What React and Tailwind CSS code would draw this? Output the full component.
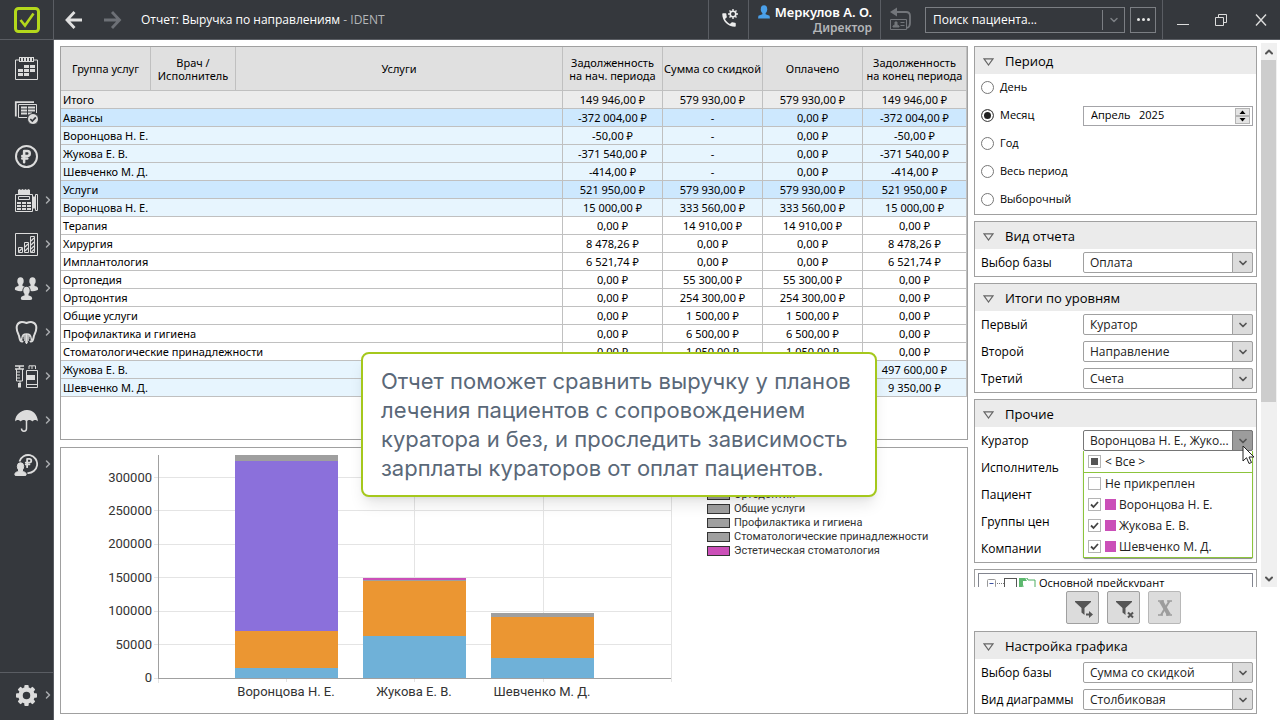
import { useState } from 'react';
import { ChevronDown, ChevronRight, ChevronUp, RussianRuble } from 'lucide-react';
import { MdPhone } from 'react-icons/md';

const rows = [
  { name: 'Итого', tone: 'total', v: ['149 946,00 ₽', '579 930,00 ₽', '579 930,00 ₽', '149 946,00 ₽'] },
  { name: 'Авансы', tone: 'group', v: ['-372 004,00 ₽', '-', '0,00 ₽', '-372 004,00 ₽'] },
  { name: 'Воронцова Н. Е.', tone: 'person', v: ['-50,00 ₽', '-', '0,00 ₽', '-50,00 ₽'] },
  { name: 'Жукова Е. В.', tone: 'person', v: ['-371 540,00 ₽', '-', '0,00 ₽', '-371 540,00 ₽'] },
  { name: 'Шевченко М. Д.', tone: 'person', v: ['-414,00 ₽', '-', '0,00 ₽', '-414,00 ₽'] },
  { name: 'Услуги', tone: 'group', v: ['521 950,00 ₽', '579 930,00 ₽', '579 930,00 ₽', '521 950,00 ₽'] },
  { name: 'Воронцова Н. Е.', tone: 'person', v: ['15 000,00 ₽', '333 560,00 ₽', '333 560,00 ₽', '15 000,00 ₽'] },
  { name: 'Терапия', tone: 'plain', v: ['0,00 ₽', '14 910,00 ₽', '14 910,00 ₽', '0,00 ₽'] },
  { name: 'Хирургия', tone: 'plain', v: ['8 478,26 ₽', '0,00 ₽', '0,00 ₽', '8 478,26 ₽'] },
  { name: 'Имплантология', tone: 'plain', v: ['6 521,74 ₽', '0,00 ₽', '0,00 ₽', '6 521,74 ₽'] },
  { name: 'Ортопедия', tone: 'plain', v: ['0,00 ₽', '55 300,00 ₽', '55 300,00 ₽', '0,00 ₽'] },
  { name: 'Ортодонтия', tone: 'plain', v: ['0,00 ₽', '254 300,00 ₽', '254 300,00 ₽', '0,00 ₽'] },
  { name: 'Общие услуги', tone: 'plain', v: ['0,00 ₽', '1 500,00 ₽', '1 500,00 ₽', '0,00 ₽'] },
  { name: 'Профилактика и гигиена', tone: 'plain', v: ['0,00 ₽', '6 500,00 ₽', '6 500,00 ₽', '0,00 ₽'] },
  { name: 'Стоматологические принадлежности', tone: 'plain', v: ['0,00 ₽', '1 050,00 ₽', '1 050,00 ₽', '0,00 ₽'] },
  { name: 'Жукова Е. В.', tone: 'person', v: ['', '', '', '497 600,00 ₽'] },
  { name: 'Шевченко М. Д.', tone: 'person', v: ['', '', '', '9 350,00 ₽'] },
];

const tones = {
  total: 'bg-[#ececec]',
  group: 'bg-[#cde8fe]',
  person: 'bg-[#e7f5fe]',
  plain: 'bg-white',
};

const bars = [
  { name: 'Воронцова Н. Е.', x: 175, parts: [[15000, '#6fb1d8'], [55300, '#eb9632'], [254300, '#8b70db'], [9000, '#9f9f9f']] },
  { name: 'Жукова Е. В.', x: 303, parts: [[63500, '#6fb1d8'], [81500, '#eb9632'], [1500, '#9f9f9f'], [3000, '#cb4fb8']] },
  { name: 'Шевченко М. Д.', x: 431, parts: [[30000, '#6fb1d8'], [61500, '#eb9632'], [5500, '#9f9f9f']] },
];

const legend = [
  ['Ортодонтия', 'bg-[#9f9f9f]'],
  ['Общие услуги', 'bg-[#9f9f9f]'],
  ['Профилактика и гигиена', 'bg-[#9f9f9f]'],
  ['Стоматологические принадлежности', 'bg-[#9f9f9f]'],
  ['Эстетическая стоматология', 'bg-[#cb4fb8]'],
];

function Bust({ x, y }) {
  return (
    <g transform={`translate(${x} ${y})`} fill="#dcdcdc">
      <ellipse cx="0" cy="0" rx="3.2" ry="3.8" />
      <path d="M-2 2.5V5c-1.500.4-3.200.6-3.600 2.400-.2 1 .2 1.600 1 1.900 3 1.300 6.200 1.300 9.200 0 .8-.3 1.200-.9 1-1.900C5.200 5.600 3.500 5.400 2 5V2.500z" />
    </g>
  );
}

const icons = {
  'Расписание': (
    <>
      <path d="M4 3H.5v19.500h22V3H19" />
      {[4, 7, 10, 13, 16].map(x => <rect key={x} x={x + 0.5} y="0.5" width="2" height="4" />)}
      <g fill="#dcdcdc" stroke="none">
        <path d="M9 8h5v3H9zM15 8h5v3h-5zM3 12h5v3H3zM9 12h5v3H9zM15 12h5v3h-5zM3 16h5v3H3zM9 16h5v3H9z" />
      </g>
    </>
  ),
  'Приемы': (
    <>
      <path d="M.8 15.500V1.200H19" strokeWidth="1.800" />
      <path d="M12 16.500H3.500v-13h18V12" />
      <path d="M6 6.500h6M13 6.500h7M6 9.500h6M13 9.500h7M6 12.500h6M13 12.500h4" strokeWidth="2" />
      <circle cx="18" cy="18" r="5.500" fill="#dcdcdc" stroke="#35383d" />
      <path d="M15.300 18l2 2 3.500-3.600" stroke="#35383d" strokeWidth="1.700" />
    </>
  ),
  'Касса': (
    <>
      <circle cx="11.500" cy="11.500" r="10.500" strokeWidth="2" />
      <RussianRuble x="3.500" y="4" size={15} strokeWidth={4} color="#dcdcdc" />
    </>
  ),
  'Отчеты кассы': (
    <>
      <path d="M3 5V1l1.500-1L6 1l1.500-1L9 1l1.500-1L12 1l1.500-1L15 1v4z" fill="#dcdcdc" stroke="none" />
      <path d="M.5 5.500h17v17H.5z" />
      <path d="M3.500 7.500h11v3h-11z" />
      <path d="M2 14h4M7 14h4M12 14h4M2 17h4M7 17h4M12 17h4M2 20h4M7 20h4M12 20h4" strokeWidth="2" />
      <path d="M18 7.500h2.500v12H18z" fill="#dcdcdc" stroke="none" />
      <path d="M20.500 21.500h2v-16h-2z" />
    </>
  ),
  'Отчеты': (
    <>
      <path d="M.5.5h22v22H.5z" />
      <path d="M3.500 14.500h4v5h-4zM9.500 9.500h4v10h-4zM15.500 3.500h4v16h-4z" />
      <path d="M4 18.500l3-3M10 14l3-3M10 18l3-3M16 8l3-3M16 12l3-3M16 16l3-3M16.500 19l2.500-2.500" strokeWidth="1.300" />
    </>
  ),
  'Персонал': (
    <g stroke="none">
      <Bust x={5.5} y={4} />
      <Bust x={17.5} y={4} />
      <ellipse cx="11.500" cy="14" rx="4.200" ry="4.800" fill="#35383d" />
      <Bust x={11.5} y={13.5} />
    </g>
  ),
  'Лечение': (
    <>
      <path d="M7.500 20.500C4 21 5 16 3.500 13.500 2 10.500 1 8 2 4.500 3.500.500 7.500.5 11.500 2c4-1.500 8-1.500 9.500 2.500 1 3.500 0 6-1.500 9-1.500 2.500-.5 7.500-4 7" strokeWidth="2" strokeLinecap="round" />
      <path d="M6.500 19c.5-6 2.500-6 5-6s4.500 0 5 6" strokeWidth="1.500" />
      <path d="M8 15h7M8.500 17h6M9 19h5M10 21h3M11.500 13v10" strokeWidth="1.300" />
    </>
  ),
  'Склад': (
    <>
      <path d="M0 1h9M4.500 1v3M0 4h9" strokeWidth="1.600" />
      <path d="M1.500 4v12h6V4M2 7h3M2 10h3M2 13h3M5 16v3" />
      <path d="M3 18h3v4.500H3z" fill="#dcdcdc" stroke="none" />
      <path d="M14 4V.8h6.500V4M17 1v3" />
      <path d="M11.500 5.500h11v17h-11zM11.500 19.500h11" />
      <path d="M12 10h8v5h-8z" fill="#dcdcdc" stroke="none" />
    </>
  ),
  'Страхование': (
    <>
      <path d="M0 12.500C.5 5 6 1.500 11.500 1S22.500 5 23 12.500c-1.500-2-4-2-5.700 0-1.500-2-4.300-2-5.800 0-1.500-2-4.300-2-5.800 0-1.700-2-4.200-2-5.700 0z" fill="#dcdcdc" stroke="none" />
      <path d="M11.500 11v8.500c0 3.500-5 3.500-5 0" strokeWidth="1.500" />
    </>
  ),
  'Зарплата': (
    <>
      <path d="M4.500 8.500a9 9 0 1 1 8 11.500" strokeWidth="1.800" />
      <RussianRuble x="8" y="4.500" size={11} strokeWidth={4} color="#dcdcdc" />
      <Bust x={5.5} y={13.5} />
    </>
  ),
};

function SideButton({ label, arrow, children }) {
  return (
    <button type="button" aria-label={label} className="flex h-11 w-full items-center pl-3.5">
      <svg viewBox="-1 -1 24 24" className="h-6 w-6 shrink-0" fill="none" stroke="#dcdcdc">{children}</svg>
      {arrow && <ChevronRight className="ml-1 h-3 w-3 shrink-0 text-[#a9abae]" strokeWidth={3} />}
    </button>
  );
}

function Sidebar() {
  return (
    <nav className="flex w-[54px] shrink-0 flex-col border-r border-[#5a5d63] bg-[#35383d] pt-1.5">
      {Object.entries(icons).map(([label, drawing], i) => (
        <SideButton key={label} label={label} arrow={i > 2}>{drawing}</SideButton>
      ))}
      <div className="mt-auto h-12 border-t border-[#5a5d63]">
        <SideButton label="Настройки" arrow>
          <circle cx="11.500" cy="11.500" r="6" strokeWidth="4.500" />
          {[0, 45, 90, 135, 180, 225, 270, 315].map(a => (
            <rect key={a} x="9.300" y="1" width="4.400" height="4" rx="1" fill="#dcdcdc" stroke="none" transform={`rotate(${a} 11.500 11.500)`} />
          ))}
        </SideButton>
      </div>
    </nav>
  );
}

function TitleBar() {
  return (
    <header className="flex h-10 shrink-0 items-stretch border-b border-[#5a5d63] bg-[#35383d] text-white">
      <div className="flex w-[54px] shrink-0 items-center justify-center border-r border-[#5a5d63]">
        <svg viewBox="0 0 26 26" className="h-[26px] w-[26px]" fill="none" stroke="#b4d81c">
          <rect x="1.500" y="1.500" width="23" height="23" rx="3" strokeWidth="3" />
          <path d="M6.500 13l4.500 5.500L19.500 6.500" strokeWidth="2.600" />
        </svg>
      </div>
      <button type="button" aria-label="Назад" className="ml-2.5 flex items-center">
        <svg viewBox="0 0 20 20" className="h-5 w-5" fill="none" stroke="#e0e0e0" strokeWidth="2.800">
          <path d="M10.500 2L3 10l7.500 8M3 10H18" />
        </svg>
      </button>
      <button type="button" aria-label="Вперед" className="ml-[18px] flex items-center">
        <svg viewBox="0 0 20 20" className="h-5 w-5" fill="none" stroke="#6d7076" strokeWidth="2.800">
          <path d="M10 2l7.500 8-7.500 8M17.500 10H2" />
        </svg>
      </button>
      <h1 className="ml-[19px] flex-1 self-center whitespace-nowrap font-['Open_Sans'] text-xs">
        Отчет: Выручка по направлениям <span className="text-[#b4b6b9]">- IDENT</span>
      </h1>
      <button type="button" aria-label="Телефония" className="flex w-[41px] items-center justify-center border-x border-[#5a5d63]">
        <span className="relative">
          <MdPhone className="h-[18px] w-[18px] text-[#ececec]" />
          <svg viewBox="0 0 10 10" className="absolute -top-0.5 right-0 h-2.5 w-2.5" fill="none" stroke="#ececec">
            <circle cx="5" cy="5" r="2.800" strokeWidth="1.600" />
            <path d="M5 0v2M5 8v2M0 5h2M8 5h2M1.500 1.500l1.200 1.200M7.300 7.300l1.200 1.200M8.500 1.500L7.300 2.700M2.700 7.300L1.500 8.500" strokeWidth="1.400" />
          </svg>
        </span>
      </button>
      <div className="flex w-[132px] flex-col items-end justify-center border-r border-[#5a5d63] pr-2 leading-4">
        <div className="flex items-center gap-1 text-[13px] font-semibold">
          <svg viewBox="0 0 12 13" className="h-3.5 w-3.5" fill="#4aa0ea">
            <ellipse cx="6" cy="4" rx="3" ry="3.700" />
            <path d="M4.500 6.500v2L.8 10 .5 12.500h11L11.200 10 7.500 8.500v-2z" />
          </svg>
          Меркулов А. О.
        </div>
        <div className="text-xs font-semibold text-[#b4b6b9]">Директор</div>
      </div>
      <button type="button" aria-label="Карточка" className="ml-2 flex w-6 items-center">
        <svg viewBox="0 0 24 26" className="h-[26px] w-6" fill="none" stroke="#73767b">
          <path d="M8 5h9q4 0 4 4v7q0 4-3 5" strokeWidth="1.800" />
          <path d="M1 5l7-4.500v9z" fill="#73767b" stroke="none" />
          <path d="M1.500 12.500h16v10h-16z" />
          <path d="M4 20v-1l2-1v-3h2v3l2 1v1zM11.500 15.500h4M11.500 18.500h4" fill="#73767b" />
        </svg>
      </button>
      <div className="ml-3 flex w-[200px] self-center border border-[#7b7e83]">
        <input type="text" aria-label="Поиск пациента" placeholder="Поиск пациента..." className="h-6 min-w-0 flex-1 px-[7px] font-['Open_Sans'] text-xs outline-none placeholder:text-white" />
        <button type="button" aria-label="История поиска" className="my-0.5 flex w-[22px] items-center justify-center border-l border-[#7b7e83]">
          <ChevronDown className="h-3 w-3 text-[#7b7e83]" strokeWidth={3} />
        </button>
      </div>
      <button type="button" aria-label="Еще" className="ml-[5px] flex h-[26px] w-[26px] items-center justify-center gap-0.5 self-center border border-[#7b7e83]">
        {[1, 2, 3].map(i => <span key={i} className="h-[3px] w-[3px] rounded-full bg-[#e6e6e6]" />)}
      </button>
      <div className="ml-1.5 flex w-[118px] items-center border-l border-[#5a5d63] pl-3.5">
        <button type="button" aria-label="Свернуть" className="mt-2.5 h-px w-3 bg-[#dcdcdc]" />
        <button type="button" aria-label="Восстановить" className="ml-[26px]">
          <svg viewBox="0 0 12 12" className="h-3 w-3" fill="none" stroke="#dcdcdc">
            <path d="M.5 3.500h8v8h-8zM3.500 3V.5h8v8H9" />
          </svg>
        </button>
        <button type="button" aria-label="Закрыть" className="ml-7">
          <svg viewBox="0 0 12 12" className="h-3 w-3" fill="none" stroke="#dcdcdc" strokeWidth="1.400">
            <path d="M1 .5l10 11M11 .5L1 11.500" />
          </svg>
        </button>
      </div>
    </header>
  );
}

function ReportTable() {
  const th = 'border-b border-r border-[#c0c0c0] p-0 font-normal leading-[13px]';
  return (
    <div className="min-h-0 flex-1 overflow-hidden border border-[#a0a0a0] bg-white">
      <table className="w-full table-fixed border-separate border-spacing-0 text-[11px]">
        <colgroup>
          <col className="w-[90px]" /><col className="w-[85px]" /><col />
          <col className="w-[100px]" /><col className="w-[100px]" /><col className="w-[100px]" /><col className="w-[104px]" />
        </colgroup>
        <thead>
          <tr className="h-11 bg-[#e0e0e0]">
            <th className={th}>Группа услуг</th>
            <th className={th}>Врач /<br />Исполнитель</th>
            <th className={th}>Услуги</th>
            <th className={th}>Задолженность<br />на нач. периода</th>
            <th className={`${th} whitespace-nowrap`}>Сумма со скидкой</th>
            <th className={th}>Оплачено</th>
            <th className={`${th} whitespace-nowrap`}>Задолженность<br />на конец периода</th>
          </tr>
        </thead>
        <tbody>
          {rows.map((r, i) => (
            <tr key={i} className={`h-[18px] ${tones[r.tone]}`}>
              <td colSpan={3} className="border-b border-r border-[#c0c0c0] p-0 pl-0.5 leading-[17px]">{r.name}</td>
              {r.v.map((v, j) => (
                <td key={j} className="border-b border-r border-[#c0c0c0] p-0 text-center leading-[17px]">{v}</td>
              ))}
            </tr>
          ))}
        </tbody>
      </table>
    </div>
  );
}

function Chart() {
  const y = v => 230 - (v * 200.5) / 300000;
  return (
    <div className="flex h-[267px] shrink-0 border border-[#a0a0a0] bg-white">
      <svg viewBox="0 0 640 265" className="h-[265px] w-[640px] shrink-0" shapeRendering="crispEdges">
        {[0, 50000, 100000, 150000, 200000, 250000, 300000].map(t => (
          <g key={t}>
            <line x1="93" x2="610" y1={y(t)} y2={y(t)} stroke="#e4e4e4" />
            <text x="91" y={Math.round(y(t)) + 4} textAnchor="end" className="fill-[#333] font-[Roboto] text-[13px]">{t}</text>
          </g>
        ))}
        {[225.5, 353.5, 482.5, 610.5].map(x => <line key={x} x1={x} x2={x} y1="7" y2="234" stroke="#e4e4e4" />)}
        {bars.map(b => {
          let sum = 0;
          return (
            <g key={b.name}>
              {b.parts.map(([v, color], i) => {
                const bottom = y(sum);
                sum += v;
                return <rect key={i} x={b.x - 1} y={y(sum)} width="103" height={bottom - y(sum)} fill={color} />;
              })}
              <text x={b.x + 50} y="248" textAnchor="middle" className="fill-[#333] font-[Roboto] text-[13px]">{b.name}</text>
            </g>
          );
        })}
        <path d="M97.500 7v223.500H610" fill="none" stroke="#a0a0a0" />
        <path d="M97.500 231v4" stroke="#e4e4e4" />
      </svg>
      <ul className="ml-1.5 mt-10 font-[Roboto] text-[11px] leading-[14px] text-[#333]">
        {legend.map(([name, color]) => (
          <li key={name} className="flex items-center gap-1 whitespace-nowrap">
            <span className={`h-2.5 w-[23px] border border-[#333] ${color}`} />
            {name}
          </li>
        ))}
      </ul>
    </div>
  );
}

function Panel({ title, children }) {
  return (
    <section className="shrink-0 border border-[#a0a0a0] bg-white">
      <h2 className="bg-[#ebebeb]">
        <button type="button" className="flex h-[27px] w-full items-center gap-[11px] pl-2 pt-0.5 text-[13px]">
          <svg viewBox="0 0 11 8" className="h-2 w-[11px]" fill="none" stroke="#666" strokeWidth="1.200">
            <path d="M1 .8h9L5.500 7z" />
          </svg>
          {title}
        </button>
      </h2>
      {children}
    </section>
  );
}

function SelectRow({ id, label, value, open }) {
  return (
    <div className="flex h-[27px] items-center pl-1.5 pr-[3px] text-xs">
      <label htmlFor={id} className="w-[102px] shrink-0 whitespace-nowrap">{label}</label>
      <div className="relative min-w-0 flex-1">
        <select id={id} className={`block h-[21px] w-full appearance-none rounded-xs border bg-white pl-1.5 leading-[19px] text-[#222] ${open ? 'border-[#777]' : 'border-[#a0a0a0]'}`}>
          <option>{value}</option>
        </select>
        <span className={`pointer-events-none absolute inset-y-0 right-0 flex w-[21px] items-center justify-center rounded-r-xs border ${open ? 'border-[#777] bg-[#9c9c9c]' : 'border-[#a0a0a0] bg-[#dcdcdc]'}`}>
          <ChevronDown className="h-3 w-3 text-[#555]" strokeWidth={3.5} />
        </span>
      </div>
    </div>
  );
}

function CheckItem({ label, checked, mixed, color, onChange }) {
  return (
    <label className="flex h-[21px] items-center pl-1">
      <input type="checkbox" checked={checked} onChange={onChange} className="peer sr-only" />
      <span className="flex h-[13px] w-[13px] items-center justify-center border border-[#b4b4b4] bg-white">
        {mixed && <span className="h-[7px] w-[7px] bg-[#555]" />}
        {checked && !mixed && (
          <svg viewBox="0 0 9 9" className="h-[9px] w-[9px]" fill="none" stroke="#444" strokeWidth="1.800"><path d="M1 4.500l2.500 2.500L8 2" /></svg>
        )}
      </span>
      {color && <span className="ml-1 h-[11px] w-[11px] bg-[#cb4fb8]" />}
      <span className={color ? 'ml-[3px]' : 'ml-1'}>{label}</span>
    </label>
  );
}

function CuratorMenu() {
  const [picked, setPicked] = useState({ 'Воронцова Н. Е.': true, 'Жукова Е. В.': true, 'Шевченко М. Д.': true });
  const toggle = name => setPicked({ ...picked, [name]: !picked[name] });
  return (
    <div className="absolute left-[108px] right-[3px] top-6 border border-t-0 border-[#8cc43c] bg-white text-xs text-[#222] shadow-sm">
      <div className="border-b border-[#8cc43c]">
        <CheckItem label="< Все >" checked mixed onChange={() => setPicked({})} />
      </div>
      <div>
        <CheckItem label="Не прикреплен" checked={!!picked.none} onChange={() => toggle('none')} />
        {['Воронцова Н. Е.', 'Жукова Е. В.', 'Шевченко М. Д.'].map(name => (
          <CheckItem key={name} label={name} color checked={!!picked[name]} onChange={() => toggle(name)} />
        ))}
      </div>
      <svg viewBox="0 0 14 20" className="absolute -right-1 -top-1.5 h-5 w-3.5" fill="#fff" stroke="#222">
        <path d="M1 1v15l3.500-3.300L7 18.500l2.500-1L7 12h5z" />
      </svg>
    </div>
  );
}

function Period() {
  const [mode, setMode] = useState('Месяц');
  return (
    <Panel title="Период">
      {['День', 'Месяц', 'Год', 'Весь период', 'Выборочный'].map(m => (
        <div key={m} className="flex h-7 items-center pb-px pl-1.5 pr-[3px] text-[11px]">
          <label className="flex w-[102px] shrink-0 items-center gap-1.5 whitespace-nowrap">
            <input type="radio" name="period" checked={mode === m} onChange={() => setMode(m)}
              className="h-[13px] w-[13px] appearance-none rounded-full border border-[#777] bg-white checked:border-[#555] checked:bg-[#222] checked:shadow-[inset_0_0_0_2px_#fff]" />
            {m}
          </label>
          {m === 'Месяц' && (
            <div className="flex h-5 min-w-0 flex-1 items-center border border-[#a4a4a8] pr-0.5">
              <input type="text" aria-label="Выбранный месяц" defaultValue="Апрель   2025" className="min-w-0 flex-1 pl-[7px] outline-none" />
              <div className="flex w-[15px] flex-col">
                <button type="button" aria-label="Следующий месяц" className="flex h-2 items-center justify-center border border-[#b4b4b4] bg-[#e4e4e4]">
                  <svg viewBox="0 0 7 4" className="h-1 w-[7px]"><path d="M.5 4h6l-3-3.500z" /></svg>
                </button>
                <button type="button" aria-label="Предыдущий месяц" className="flex h-2 items-center justify-center border border-[#b4b4b4] bg-[#e4e4e4]">
                  <svg viewBox="0 0 7 4" className="h-1 w-[7px]"><path d="M.5 0h6l-3 3.500z" /></svg>
                </button>
              </div>
            </div>
          )}
        </div>
      ))}
    </Panel>
  );
}

function Filters() {
  return (
    <aside className="flex w-[306px] shrink-0 flex-col pb-1.5 font-['Open_Sans',sans-serif]">
      <div className="flex min-h-0 flex-1 overflow-hidden pr-[3px]">
        <div className="flex min-h-0 flex-1 flex-col gap-1.5 overflow-hidden pt-1.5">
          <Period />
          <Panel title="Вид отчета">
            <SelectRow id="base" label="Выбор базы" value="Оплата" />
          </Panel>
          <Panel title="Итоги по уровням">
            <SelectRow id="l1" label="Первый" value="Куратор" />
            <SelectRow id="l2" label="Второй" value="Направление" />
            <SelectRow id="l3" label="Третий" value="Счета" />
          </Panel>
          <Panel title="Прочие">
            <div className="relative">
              <SelectRow id="curator" label="Куратор" value="Воронцова Н. Е., Жуко..." open />
              <SelectRow id="doctor" label="Исполнитель" />
              <SelectRow id="patient" label="Пациент" />
              <SelectRow id="price" label="Группы цен" />
              <SelectRow id="company" label="Компании" />
              <CuratorMenu />
            </div>
          </Panel>
          <section className="shrink-0 border border-[#a0a0a0] px-[3px] pt-[3px]">
            <div className="flex h-10 items-start border border-[#82858f] pl-2 text-[11px]">
              <svg viewBox="0 0 50 16" className="mt-1 h-4 w-[50px] shrink-0" fill="none">
                <rect x=".5" y="1.500" width="8" height="8" rx="1" stroke="#999" />
                <path d="M2.500 5.500h4" stroke="#3c50a0" />
                <path d="M10 5.500h7" stroke="#777" strokeDasharray="1 1" />
                <rect x="17.500" y=".5" width="12" height="12" stroke="#555" />
                <path d="M34 0h6l1 2h7v11H37z" fill="#fff" stroke="#4fae62" />
                <path d="M32 0h6l2 3h-4l-1 10h-3z" fill="#5cb86e" />
              </svg>
              <span className="ml-0.5 mt-0.5 leading-[14px]">Основной прейскурант</span>
            </div>
          </section>
        </div>
        <div className="ml-1 mt-[3px] flex w-4 flex-col bg-[#f0f0f0]">
          <button type="button" aria-label="Вверх" className="flex h-[17px] items-center justify-center">
            <ChevronUp className="h-3 w-3 text-[#555]" strokeWidth={4} />
          </button>
          <div className="flex-1"><div className="mr-px h-[67%] bg-[#cdcdcd]" /></div>
          <button type="button" aria-label="Вниз" className="flex h-[17px] items-center justify-center">
            <ChevronDown className="h-3 w-3 text-[#555]" strokeWidth={4} />
          </button>
        </div>
      </div>
      <div className="flex w-[283px] shrink-0 flex-col gap-[7px] pt-1">
        <div className="flex justify-center gap-2 pl-4">
          <button type="button" aria-label="Применить фильтр" className="h-[33px] w-[33px] rounded-xs border border-[#a0a0a0] bg-[#dcdcdc] pl-[7px] pt-1">
            <svg viewBox="0 0 20 20" className="h-5 w-5" fill="#555">
              <path d="M1 1h16v1L10.500 8v7l-3-2.500V8L1 2zM12 13.500h3V11l4 3.500-4 3.500v-2.500h-3z" />
            </svg>
          </button>
          <button type="button" aria-label="Сбросить фильтр" className="h-[33px] w-[33px] rounded-xs border border-[#a0a0a0] bg-[#dcdcdc] pl-[7px] pt-1">
            <svg viewBox="0 0 20 20" className="h-5 w-5" fill="#555">
              <path d="M1 1h16v1L10.500 8v7l-3-2.500V8L1 2z" />
              <path d="M13 12.500l5 5M18 12.500l-5 5" stroke="#555" strokeWidth="2" />
            </svg>
          </button>
          <button type="button" aria-label="Выгрузить в Excel" disabled className="flex h-[33px] w-[33px] items-center justify-center rounded-xs border border-[#b8b8b8] bg-[#dcdcdc]">
            <svg viewBox="0 0 16 16" className="h-4 w-4" fill="none" stroke="#9c9c9c">
              <path d="M4 1l8 14" strokeWidth="4" />
              <path d="M12.500 1L4 15" strokeWidth="2" />
              <path d="M1 1h6M10 1h5M1 15h5M9 15h6" strokeWidth="1.500" />
            </svg>
          </button>
        </div>
        <Panel title="Настройка графика">
          <SelectRow id="chart-base" label="Выбор базы" value="Сумма со скидкой" />
          <SelectRow id="chart-kind" label="Вид диаграммы" value="Столбиковая" />
        </Panel>
      </div>
    </aside>
  );
}

export default function App() {
  return (
    <div className="relative flex h-screen flex-col overflow-hidden bg-white font-['Noto_Sans',sans-serif] text-black">
      <TitleBar />
      <div className="flex min-h-0 flex-1">
        <Sidebar />
        <main className="flex min-w-0 flex-1 flex-col gap-[7px] p-1.5">
          <ReportTable />
          <Chart />
        </main>
        <Filters />
      </div>
      <div className="absolute left-[361px] top-[352px] w-[516px] rounded-lg border-2 border-[#a5c81c] bg-white px-[18px] pb-3 pt-[13px] font-[Inter] text-[22px] leading-[29px] text-[#5a6878] shadow-lg">
        <p className="whitespace-nowrap">
          Отчет поможет сравнить выручку у планов<br />
          лечения пациентов с сопровождением<br />
          куратора и без, и проследить зависимость<br />
          зарплаты кураторов от оплат пациентов.
        </p>
      </div>
    </div>
  );
}
